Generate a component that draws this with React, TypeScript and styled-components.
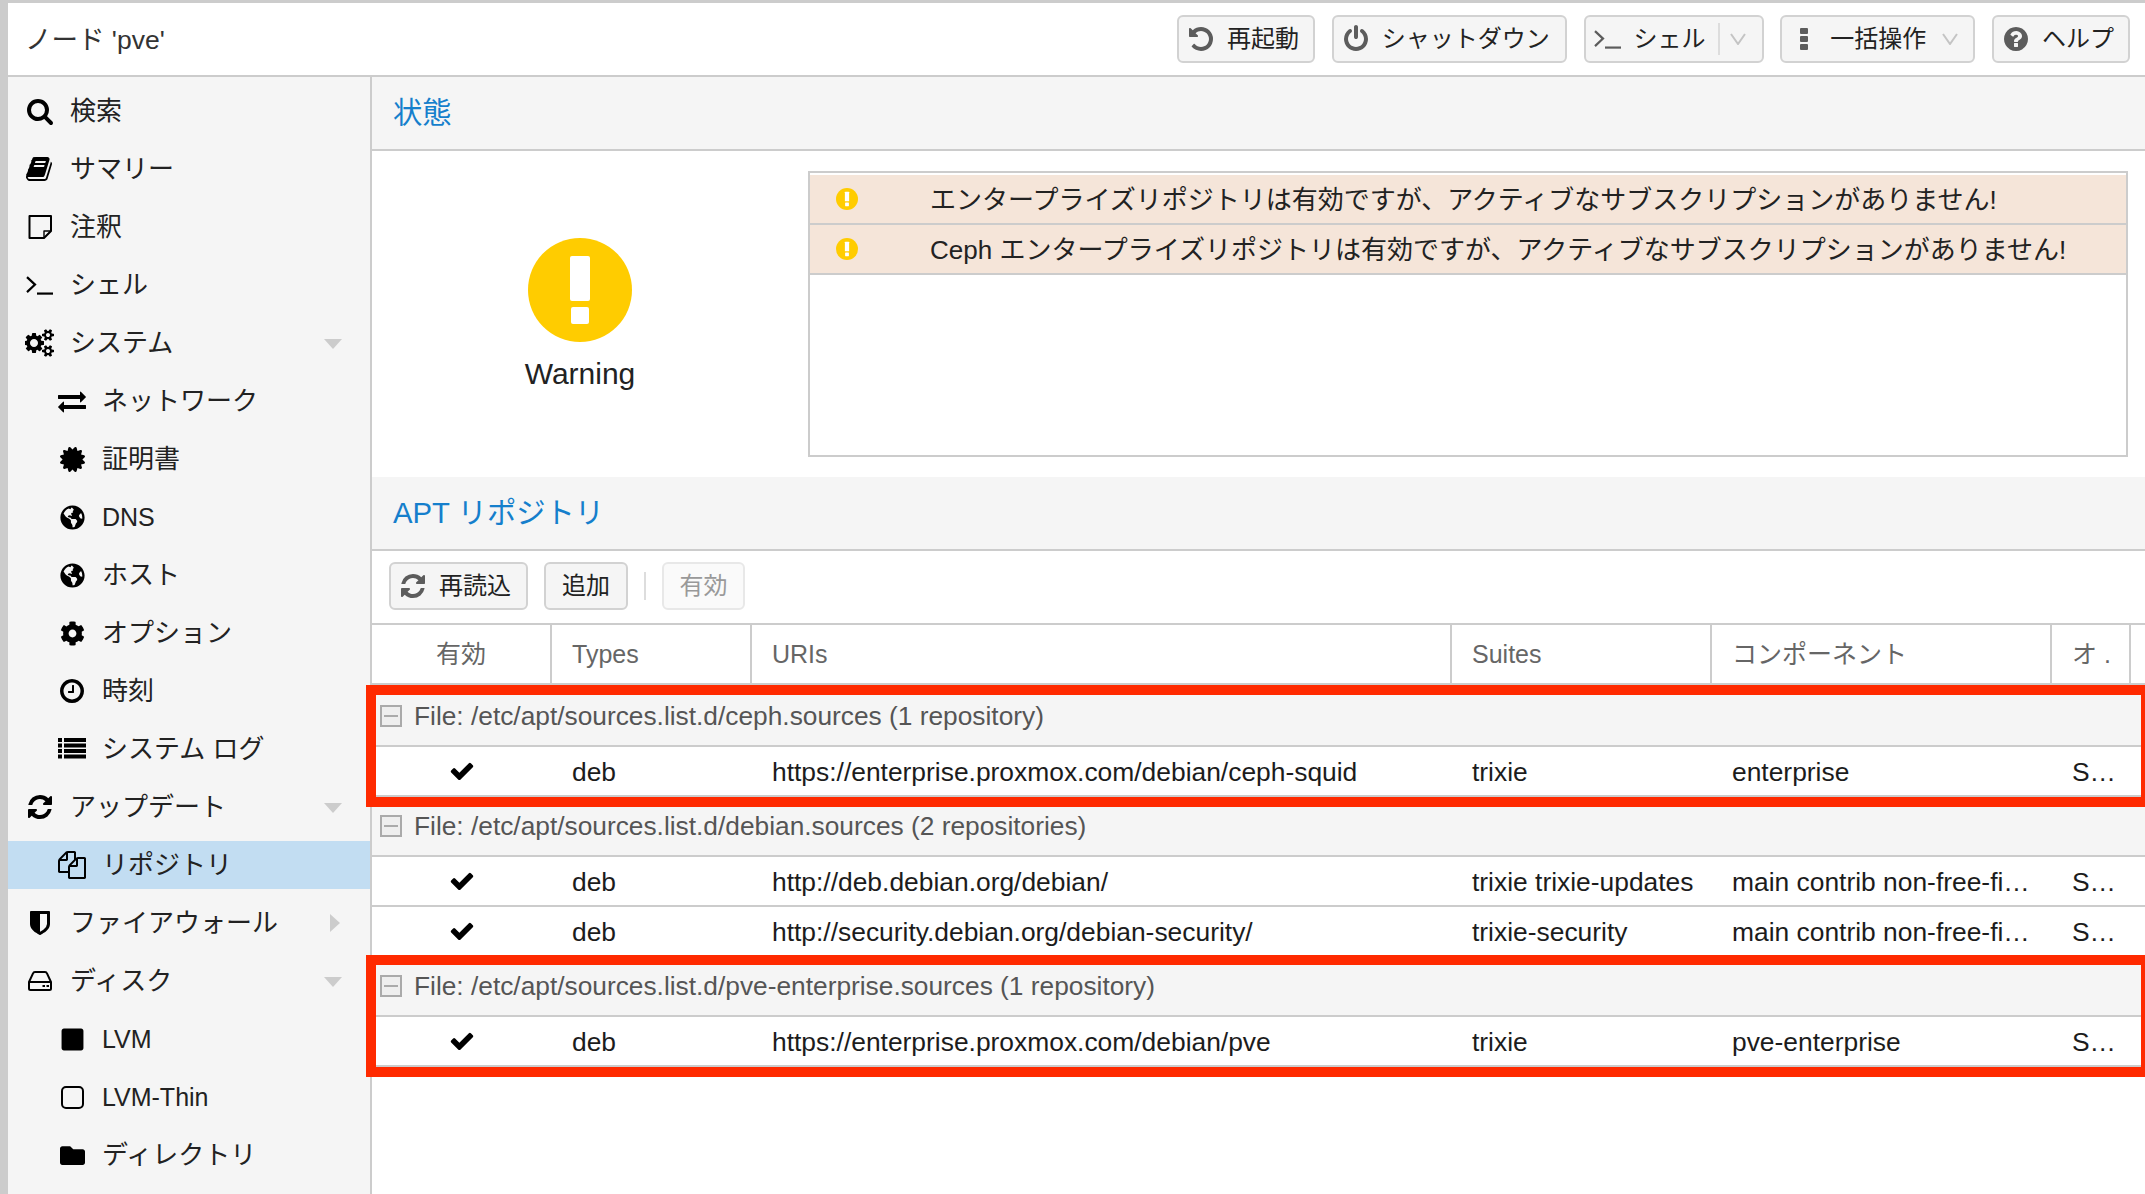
import React from "react";
import styled, { createGlobalStyle } from "styled-components";
import { FaCertificate, FaGlobeAmericas, FaCog, FaSquare, FaFolder } from "react-icons/fa";

const Global = createGlobalStyle`
  html, body { margin: 0; padding: 0; background: #fff; }
  body { width: 2145px; height: 1194px; overflow: hidden; font-family: "Liberation Sans", "Noto Sans CJK JP", sans-serif; color: #1c1c1c; }
  * { box-sizing: border-box; }
`;

const Page = styled.div`
  width: 2145px; height: 1194px; border-top: 3px solid #ccc; border-left: 8px solid #ccc;
  display: flex; flex-direction: column; background: #fff; overflow: hidden;
`;
const Header = styled.header`
  height: 74px; flex: none; display: flex; align-items: center; justify-content: space-between;
  padding: 0 15px 0 17px; border-bottom: 2px solid #ccc; background: #fff;
`;
const NodeTitle = styled.div`font-size: 26.5px; color: #333; margin-bottom: 3px;`;
const HeaderTools = styled.div`display: flex; gap: 16.75px;`;
const Btn = styled.div<{ $w: number; $off?: boolean }>`
  width: ${(p) => p.$w}px; height: 48px; display: flex; align-items: center; white-space: nowrap;
  background: ${(p) => (p.$off ? "#fafafa" : "#f5f5f5")}; border: 2px solid ${(p) => (p.$off ? "#e8e8e8" : "#d2d2d2")};
  border-radius: 6px; font-size: 24px; color: ${(p) => (p.$off ? "#999" : "#222")};
  justify-content: ${(p) => (p.$off ? "center" : "flex-start")};
`;
const BtnIcon = styled.span`
  width: 28px; height: 28px; margin: 0 12px 0 8px; display: flex; align-items: center; justify-content: center;
  color: #5c5c5c; font-size: 28px; flex: none;
`;
const BtnSep = styled.span`width: 2px; height: 32px; background: #ddd; margin-left: 12px;`;
const Chevron = styled.svg<{ $gap: number }>`width: 16px; height: 12px; margin-left: ${(p) => p.$gap}px; flex: none;`;
const PlainLabel = styled.span`margin-left: 16px; margin-bottom: 5px;`;
const Label = styled.span`margin-bottom: 5px;`;

const Body = styled.div`flex: 1; display: flex; min-height: 0;`;
const Sidebar = styled.nav`
  width: 364px; flex: none; background: #f5f5f5; border-right: 2px solid #ccc; padding-top: 10px;
  display: flex; flex-direction: column; gap: 10px; overflow: hidden;
`;
const NavRow = styled.div<{ $child?: boolean; $sel?: boolean }>`
  height: 48px; flex: none; display: flex; align-items: center; position: relative;
  padding-left: ${(p) => (p.$child ? 46 : 14)}px; background: ${(p) => (p.$sel ? "#c2ddf2" : "transparent")};
  color: #222;
`;
const NavIcon = styled.span`
  width: 36px; height: 32px; display: flex; align-items: center; justify-content: center; color: #000;
  font-size: 28px; margin-right: 12px; flex: none;
`;
const ReactIconBox = styled.span`display: flex; font-size: 25px;`;
const NavLabel = styled.span<{ $latin: boolean }>`
  font-size: ${(p) => (p.$latin ? 25 : 26)}px;
  margin-bottom: ${(p) => (p.$latin ? 0 : 5)}px;
`;
const Arrow = styled.span<{ $dir: "down" | "right" }>`
  position: absolute; width: 0; height: 0; 
  ${(p) => p.$dir === "down"
    ? "right: 28px; top: 20px; border-left: 9px solid transparent; border-right: 9px solid transparent; border-top: 10px solid #ccc;"
    : "right: 30px; top: 15px; border-top: 9px solid transparent; border-bottom: 9px solid transparent; border-left: 10px solid #ccc;"}
`;

const Main = styled.main`flex: 1; min-width: 0; display: flex; flex-direction: column;`;
const TitleBand = styled.div`
  height: 74px; flex: none; display: flex; align-items: center; padding: 0 0 7px 21px; background: #f5f5f5;
  border-bottom: 2px solid #ccc; font-size: 29.3px; color: #157fcc;
`;
const StatusBody = styled.section`
  height: 326px; flex: none; display: flex; padding: 20px 17px 20px 0; gap: 20px; background: #fff;
`;
const StatusCol = styled.div`
  width: 416px; flex: none; display: flex; flex-direction: column; align-items: center; justify-content: center; gap: 15px;
`;
const StatusLabel = styled.div`font-size: 30px; color: #222;`;
const MessageBox = styled.div`flex: 1; border: 2px solid #ccc; padding-top: 2px;`;
const MessageRow = styled.div`
  height: 50px; display: flex; align-items: center; background: #f5e5d9; border-bottom: 2px solid #ccc;
  font-size: 26px; padding-left: 26px; color: #222; white-space: nowrap;
`;
const MessageText = styled.span`margin: 0 0 3px 72px;`;

const Toolbar = styled.div`
  height: 74px; flex: none; display: flex; align-items: center; gap: 16px; padding: 0 0 2px 17px;
  border-bottom: 2px solid #ccc;
`;
const ToolSep = styled.span`width: 2px; height: 28px; background: #ddd;`;
const GridRow = styled.div`
  display: grid; grid-template-columns: 180px 200px 700px 260px 340px 79px 1fr;
`;
const HeadRow = styled(GridRow)`height: 60px; border-bottom: 2px solid #ccc;`;
const HeadCell = styled.div<{ $center?: boolean }>`
  display: flex; align-items: center; justify-content: ${(p) => (p.$center ? "center" : "flex-start")};
  padding-left: ${(p) => (p.$center ? 0 : 20)}px; border-right: 2px solid #ccc; font-size: 25px; color: #666; white-space: nowrap;
`;
const Rows = styled.div`position: relative; flex: 1;`;
const GroupRow = styled.div<{ $first?: boolean }>`
  height: ${(p) => (p.$first ? 62 : 60)}px; display: flex; align-items: center; background: #f5f5f5;
  border-bottom: 2px solid #ccc; padding: ${(p) => (p.$first ? "2px" : "0")} 0 0 8px; font-size: 26.3px; color: #555;
`;
const Expander = styled.span`
  width: 22px; height: 22px; margin-right: 12px; border: 2px solid #aaa; background: #eee; flex: none;
  display: flex; align-items: center; justify-content: center;
  &::before { content: ""; width: 14px; height: 2px; background: #aaa; }
`;
const DataRow = styled(GridRow)`height: 50px; border-bottom: 2px solid #ccc;`;
const Cell = styled.div`
  display: flex; align-items: center; padding: 3px 0 0 20px; font-size: 26.4px; color: #1c1c1c; white-space: nowrap;
`;
const CheckCell = styled.div`display: flex; align-items: center; justify-content: center; font-size: 26px; color: #000;`;
const Highlight = styled.div<{ $top: number }>`
  position: absolute; left: -6px; right: 0; top: ${(p) => p.$top}px; height: 122px;
  border: 10px solid #ff2a00; border-right-width: 4px; pointer-events: none;
`;

// FontAwesome 4 glyphs, the set this screen uses
const Fa4 = ({ d, w = 1792 }: { d: string; w?: number }) => (
  <svg width={`${w / 1792}em`} height="1em" viewBox={`0 0 ${w} 1792`} fill="currentColor"><path d={d} /></svg>
);
const P = {
  search: "M1216 832q0-185-131.5-316.5t-316.5-131.5-316.5 131.5-131.5 316.5 131.5 316.5 316.5 131.5 316.5-131.5 131.5-316.5zm512 832q0 52-38 90t-90 38q-54 0-90-38l-343-342q-179 124-399 124-143 0-273.5-55.5t-225-150-150-225-55.5-273.5 55.5-273.5 150-225 225-150 273.5-55.5 273.5 55.5 225 150 150 225 55.5 273.5q0 220-124 399l343 343q37 37 37 90z",
  book: "M1639 478q40 57 18 129l-275 906q-19 64-76.5 107.5t-122.5 43.5h-923q-77 0-148.5-53.5t-99.5-131.5q-24-67-2-127 0-4 3-27t4-37q1-8-3-21.5t-3-19.5q2-11 8-21t16.5-23.5 16.5-23.5q23-38 45-91.5t30-91.5q3-10 .5-30t-.5-28q3-11 17-28t17-23q21-36 42-92t25-90q1-9-2.5-32t.5-28q4-13 22-30.5t22-22.5q19-26 42.5-84.5t27.5-96.5q1-8-3-25.5t-2-26.5q2-8 9-18t18-23 17-21q8-12 16.5-30.5t15-35 16-36 19.5-32 26.5-23.5 36-11.5 47.5 5.5l-1 3q38-9 51-9h761q74 0 114 56t18 130l-274 906q-36 119-71.5 153.5t-128.5 34.5h-869q-27 0-38 15-11 16-1 43 24 70 144 70h923q29 0 56-15.5t35-41.5l300-987q7-22 5-57 38 15 59 43zm-1064 2q-4 13 2 22.5t20 9.5h608q13 0 25.5-9.5t16.5-22.5l21-64q4-13-2-22.5t-20-9.5h-608q-13 0-25.5 9.5t-16.5 22.5zm-83 256q-4 13 2 22.5t20 9.5h608q13 0 25.5-9.5t16.5-22.5l21-64q4-13-2-22.5t-20-9.5h-608q-13 0-25.5 9.5t-16.5 22.5z",
  files: "M1696 384q40 0 68 28t28 68v1216q0 40-28 68t-68 28h-960q-40 0-68-28t-28-68v-288h-544q-40 0-68-28t-28-68v-672q0-40 20-88t48-76l408-408q28-28 76-48t88-20h416q40 0 68 28t28 68v328q68-40 128-40h416zm-544 213l-299 299h299v-299zm-640-384l-299 299h299v-299zm196 647l316-316v-416h-384v416q0 40-28 68t-68 28h-416v640h512v-256q0-40 20-88t48-76zm956 804v-1152h-384v416q0 40-28 68t-68 28h-416v640h896z",
  undo: "M1664 896q0 156-61 298t-164 245-245 164-298 61q-172 0-327-72.5t-264-204.5q-7-10-6.5-22.5t8.5-20.5l137-138q10-9 25-9 16 2 23 12 73 95 179 147t225 52q104 0 198.5-40.5t163.5-109.5 109.5-163.5 40.5-198.5-40.5-198.5-109.5-163.5-163.5-109.5-198.5-40.5q-98 0-188 35.5t-160 101.5l137 138q31 30 14 69-17 40-59 40h-448q-26 0-45-19t-19-45v-448q0-42 40-59 39-17 69 14l130 129q107-101 244.5-156.5t284.5-55.5q156 0 298 61t245 164 164 245 61 298z",
  shield: "M1344 960v-640h-448v1137q119-63 213-137 235-184 235-360zm192-768v768q0 86-33.5 170.5t-83 150-118 127.5-126.5 103-121 77.5-89.5 49.5-42.5 20q-12 6-26 6t-26-6q-16-7-42.5-20t-89.5-49.5-121-77.5-126.5-103-118-127.5-83-150-33.5-170.5v-768q0-26 19-45t45-19h1152q26 0 45 19t19 45z",
  clock: "M1024 544v448q0 14-9 23t-23 9h-320q-14 0-23-9t-9-23v-64q0-14 9-23t23-9h224v-352q0-14 9-23t23-9h64q14 0 23 9t9 23zm416 352q0-148-73-273t-198-198-273-73-273 73-198 198-73 273 73 273 198 198 273 73 273-73 198-198 73-273zm224 0q0 209-103 385.5t-279.5 279.5-385.5 103-385.5-103-279.5-279.5-103-385.5 103-385.5 279.5-279.5 385.5-103 385.5 103 279.5 279.5 103 385.5z",
  refresh: "M1639 1056q0 5-1 7-64 268-268 434.5t-478 166.5q-146 0-282.5-55t-243.5-157l-129 129q-19 19-45 19t-45-19-19-45v-448q0-26 19-45t45-19h448q26 0 45 19t19 45-19 45l-137 137q71 66 161 102t187 36q134 0 250-65t186-179q11-17 53-117 8-23 30-23h192q13 0 22.5 9.5t9.5 22.5zm25-800v448q0 26-19 45t-45 19h-448q-26 0-45-19t-19-45 19-45l138-138q-148-137-349-137-134 0-250 65t-186 179q-11 17-53 117-8 23-30 23h-199q-13 0-22.5-9.5t-9.5-22.5v-7q65-268 270-434.5t480-166.5q146 0 284 55.5t245 156.5l130-129q19-19 45-19t45 19 19 45z",
  check: "M1671 566q0 40-28 68l-724 724-136 136q-28 28-68 28t-68-28l-136-136-362-362q-28-28-28-68t28-68l136-136q28-28 68-28t68 28l294 295 656-657q28-28 68-28t68 28l136 136q28 28 28 68z",
  power: "M1664 896q0 156-61 298t-164 245-245 164-298 61-298-61-245-164-164-245-61-298q0-182 80.5-343t226.5-270q43-32 95.5-25t83.5 50q32 42 24.5 94.5t-49.5 84.5q-98 74-151.5 181t-53.5 228q0 104 40.5 198.5t109.5 163.5 163.5 109.5 198.5 40.5 198.5-40.5 163.5-109.5 109.5-163.5 40.5-198.5q0-121-53.5-228t-151.5-181q-42-32-49.5-84.5t24.5-94.5q31-43 84-50t95 25q146 109 226.5 270t80.5 343zm-640-768v640q0 52-38 90t-90 38-90-38-38-90v-640q0-52 38-90t90-38 90 38 38 90z",
  question: "M1024 1376v-192q0-14-9-23t-23-9h-192q-14 0-23 9t-9 23v192q0 14 9 23t23 9h192q14 0 23-9t9-23zm256-672q0-88-55.5-163t-138.5-116-170-41q-243 0-371 213-15 24 8 42l132 100q7 6 19 6 16 0 25-12 53-68 86-92 34-24 86-24 48 0 85.5 26t37.5 59q0 38-20 61t-68 45q-63 28-115.5 86.5t-52.5 125.5v36q0 14 9 23t23 9h192q14 0 23-9t9-23q0-19 21.5-49.5t54.5-49.5q32-18 49-28.5t46-35 44.5-48 28-60.5 12.5-81zm384 192q0 209-103 385.5t-279.5 279.5-385.5 103-385.5-103-279.5-279.5-103-385.5 103-385.5 279.5-279.5 385.5-103 385.5 103 279.5 279.5 103 385.5z",
  cogs: "M832 896q0-106-75-181t-181-75-181 75-75 181 75 181 181 75 181-75 75-181zm768 512q0-52-38-90t-90-38-90 38-38 90q0 53 37.5 90.5t90.5 37.5 90.5-37.5 37.5-90.5zm0-1024q0-52-38-90t-90-38-90 38-38 90q0 53 37.5 90.5t90.5 37.5 90.5-37.5 37.5-90.5zm-384 421v185q0 10-7 19.5t-16 10.5l-155 24q-11 35-32 76 34 48 90 115 7 11 7 20 0 12-7 19-23 30-82.5 89.5t-78.5 59.5q-11 0-21-7l-115-90q-37 19-77 31-11 108-23 155-7 24-30 24h-186q-11 0-20-7.5t-10-17.5l-23-153q-34-10-75-31l-118 89q-7 7-20 7-11 0-21-8-144-133-144-160 0-9 7-19 10-14 41-53t47-61q-23-44-35-82l-152-24q-10-1-17-9.5t-7-19.5v-185q0-10 7-19.5t16-10.5l155-24q11-35 32-76-34-48-90-115-7-11-7-20 0-12 7-20 22-30 82-89t79-59q11 0 21 7l115 90q34-18 77-32 11-108 23-154 7-24 30-24h186q11 0 20 7.5t10 17.5l23 153q34 10 75 31l118-89q8-7 20-7 11 0 21 8 144 133 144 160 0 8-7 19-12 16-42 54t-45 60q23 48 34 82l152 23q10 2 17 10.5t7 19.5zm640 533v140q0 16-149 31-12 27-30 52 51 113 51 138 0 4-4 7-122 71-124 71-8 0-46-47t-52-68q-20 2-30 2t-30-2q-14 21-52 68t-46 47q-2 0-124-71-4-3-4-7 0-25 51-138-18-25-30-52-149-15-149-31v-140q0-16 149-31 13-29 30-52-51-113-51-138 0-4 4-7 4-2 35-20t59-34 30-16q8 0 46 46.5t52 67.5q20-2 30-2t30 2q51-71 92-112l6-2q4 0 124 70 4 3 4 7 0 25-51 138 17 23 30 52 149 15 149 31zm0-1024v140q0 16-149 31-12 27-30 52 51 113 51 138 0 4-4 7-122 71-124 71-8 0-46-47t-52-68q-20 2-30 2t-30-2q-14 21-52 68t-46 47q-2 0-124-71-4-3-4-7 0-25 51-138-18-25-30-52-149-15-149-31v-140q0-16 149-31 13-29 30-52-51-113-51-138 0-4 4-7 4-2 35-20t59-34 30-16q8 0 46 46.5t52 67.5q20-2 30-2t30 2q51-71 92-112l6-2q4 0 124 70 4 3 4 7 0 25-51 138 17 23 30 52 149 15 149 31z",
  exchange: "M1792 1184v192q0 13-9.5 22.5t-22.5 9.5h-1376v192q0 13-9.5 22.5t-22.5 9.5q-12 0-24-10l-319-320q-9-9-9-22 0-14 9-23l320-320q9-9 23-9 13 0 22.5 9.5t9.5 22.5v192h1376q13 0 22.5 9.5t9.5 22.5zm0-544q0 14-9 23l-320 320q-9 9-23 9-13 0-22.5-9.5t-9.5-22.5v-192h-1376q-13 0-22.5-9.5t-9.5-22.5v-192q0-13 9.5-22.5t22.5-9.5h1376v-192q0-14 9-23t23-9q12 0 24 10l319 319q9 9 9 23z",
};

const Prompt = ({ size = 28 }: { size?: number }) => (
  <svg width={size} height={size * 0.72} viewBox="0 0 28 20" fill="none" stroke="currentColor" strokeWidth="2.2">
    <path d="M1 2l8 7.500-8 7.500" />
    <path d="M11 18.500h16" />
  </svg>
);
const Warn = ({ size }: { size: number }) => (
  <svg width={size} height={size} viewBox="0 0 104 104">
    <circle cx="52" cy="52" r="52" fill="#ffcc00" />
    <rect x="42" y="18" width="20" height="45" rx="2" fill="#fff" />
    <rect x="43" y="69" width="18" height="17" rx="2" fill="#fff" />
  </svg>
);
const Down = ({ gap }: { gap: number }) => (
  <Chevron $gap={gap} viewBox="0 0 16 12" fill="none" stroke="#c4c4c4" strokeWidth="2"><path d="M1 1l7 10 7-10" /></Chevron>
);
const Note = () => (
  <svg width="24" height="24" viewBox="0 0 24 24" fill="none" stroke="currentColor" strokeWidth="2" strokeLinejoin="round">
    <path d="M1.500 1h21.500v15l-7 7H1.500z" />
    <path d="M23 16h-7v7" strokeWidth="1.400" />
  </svg>
);
const Disk = () => (
  <svg width="24" height="20" viewBox="0 0 24 20" fill="none" stroke="currentColor" strokeWidth="2">
    <path d="M1 11L5 2.500Q5.500 1 7 1h10q1.500 0 2 1.500L23 11v6.500q0 1.500-1.500 1.500h-19Q1 19 1 17.500z" />
    <path d="M1 11h22" />
    <rect x="14.500" y="14" width="2.500" height="2" fill="currentColor" stroke="none" />
    <rect x="18.500" y="14" width="2.500" height="2" fill="currentColor" stroke="none" />
  </svg>
);
const ListIcon = () => (
  <svg width="28" height="22" viewBox="0 0 28 22" fill="currentColor">
    {[0, 5.5, 11, 16.5].map((y) => (
      <React.Fragment key={y}>
        <rect x="0" y={y} width="4" height="4" />
        <rect x="6" y={y} width="22" height="4" />
      </React.Fragment>
    ))}
  </svg>
);
const SquareOutline = () => (
  <svg width="23" height="23" viewBox="0 0 23 23" fill="none" stroke="currentColor" strokeWidth="2"><rect x="1" y="1" width="21" height="21" rx="4" /></svg>
);
const Dots = () => (
  <svg width="8" height="22" viewBox="0 0 8 22" fill="currentColor">
    <rect y="0" width="8" height="6" rx="1" /><rect y="8" width="8" height="6" rx="1" /><rect y="16" width="8" height="6" rx="1" />
  </svg>
);

type Nav = { icon: React.ReactNode; label: string; child?: boolean; sel?: boolean; arrow?: "down" | "right"; latin?: boolean };
const nav: Nav[] = [
  { icon: <Fa4 d={P.search} />, label: "検索" },
  { icon: <Fa4 d={P.book} />, label: "サマリー" },
  { icon: <Note />, label: "注釈" },
  { icon: <Prompt />, label: "シェル" },
  { icon: <Fa4 d={P.cogs} w={1920} />, label: "システム", arrow: "down" },
  { icon: <Fa4 d={P.exchange} />, label: "ネットワーク", child: true },
  { icon: <ReactIconBox><FaCertificate /></ReactIconBox>, label: "証明書", child: true },
  { icon: <ReactIconBox><FaGlobeAmericas /></ReactIconBox>, label: "DNS", child: true, latin: true },
  { icon: <ReactIconBox><FaGlobeAmericas /></ReactIconBox>, label: "ホスト", child: true },
  { icon: <ReactIconBox><FaCog /></ReactIconBox>, label: "オプション", child: true },
  { icon: <Fa4 d={P.clock} />, label: "時刻", child: true },
  { icon: <ListIcon />, label: "システム ログ", child: true },
  { icon: <Fa4 d={P.refresh} />, label: "アップデート", arrow: "down" },
  { icon: <Fa4 d={P.files} />, label: "リポジトリ", child: true, sel: true },
  { icon: <Fa4 d={P.shield} />, label: "ファイアウォール", arrow: "right" },
  { icon: <Disk />, label: "ディスク", arrow: "down" },
  { icon: <ReactIconBox><FaSquare /></ReactIconBox>, label: "LVM", child: true, latin: true },
  { icon: <SquareOutline />, label: "LVM-Thin", child: true, latin: true },
  { icon: <ReactIconBox><FaFolder /></ReactIconBox>, label: "ディレクトリ", child: true },
];

type Repo = { uri: string; suites: string; comp: string };
const groups: { file: string; repos: Repo[] }[] = [
  { file: "File: /etc/apt/sources.list.d/ceph.sources (1 repository)", repos: [
    { uri: "https://enterprise.proxmox.com/debian/ceph-squid", suites: "trixie", comp: "enterprise" },
  ] },
  { file: "File: /etc/apt/sources.list.d/debian.sources (2 repositories)", repos: [
    { uri: "http://deb.debian.org/debian/", suites: "trixie trixie-updates", comp: "main contrib non-free-fi…" },
    { uri: "http://security.debian.org/debian-security/", suites: "trixie-security", comp: "main contrib non-free-fi…" },
  ] },
  { file: "File: /etc/apt/sources.list.d/pve-enterprise.sources (1 repository)", repos: [
    { uri: "https://enterprise.proxmox.com/debian/pve", suites: "trixie", comp: "pve-enterprise" },
  ] },
];

export default function App() {
  return (
    <Page>
      <Global />
      <Header>
        <NodeTitle>ノード 'pve'</NodeTitle>
        <HeaderTools>
          <Btn $w={138}><BtnIcon><Fa4 d={P.undo} /></BtnIcon><Label>再起動</Label></Btn>
          <Btn $w={235}><BtnIcon><Fa4 d={P.power} /></BtnIcon><Label>シャットダウン</Label></Btn>
          <Btn $w={180}><BtnIcon><Prompt /></BtnIcon><Label>シェル</Label><BtnSep /><Down gap={10} /></Btn>
          <Btn $w={195}><BtnIcon><Dots /></BtnIcon><Label>一括操作</Label><Down gap={16} /></Btn>
          <Btn $w={138}><BtnIcon><Fa4 d={P.question} /></BtnIcon><Label>ヘルプ</Label></Btn>
        </HeaderTools>
      </Header>
      <Body>
        <Sidebar>
          {nav.map((n) => (
            <NavRow key={n.label} $child={n.child} $sel={n.sel}>
              <NavIcon>{n.icon}</NavIcon>
              <NavLabel $latin={!!n.latin}>{n.label}</NavLabel>
              {n.arrow && <Arrow $dir={n.arrow} />}
            </NavRow>
          ))}
        </Sidebar>
        <Main>
          <TitleBand>状態</TitleBand>
          <StatusBody>
            <StatusCol>
              <Warn size={104} />
              <StatusLabel>Warning</StatusLabel>
            </StatusCol>
            <MessageBox>
              <MessageRow><Warn size={22} /><MessageText>エンタープライズリポジトリは有効ですが、アクティブなサブスクリプションがありません!</MessageText></MessageRow>
              <MessageRow><Warn size={22} /><MessageText>Ceph エンタープライズリポジトリは有効ですが、アクティブなサブスクリプションがありません!</MessageText></MessageRow>
            </MessageBox>
          </StatusBody>
          <TitleBand>APT リポジトリ</TitleBand>
          <Toolbar>
            <Btn $w={139}><BtnIcon><Fa4 d={P.refresh} /></BtnIcon><Label>再読込</Label></Btn>
            <Btn $w={84}><PlainLabel>追加</PlainLabel></Btn>
            <ToolSep />
            <Btn $w={83} $off><Label>有効</Label></Btn>
          </Toolbar>
          <HeadRow>
            <HeadCell $center><Label>有効</Label></HeadCell>
            <HeadCell>Types</HeadCell>
            <HeadCell>URIs</HeadCell>
            <HeadCell>Suites</HeadCell>
            <HeadCell><Label>コンポーネント</Label></HeadCell>
            <HeadCell><Label>オ .</Label></HeadCell>
          </HeadRow>
          <Rows>
            {groups.map((g, i) => (
              <React.Fragment key={g.file}>
                <GroupRow $first={i === 0}><Expander />{g.file}</GroupRow>
                {g.repos.map((r) => (
                  <DataRow key={r.uri}>
                    <CheckCell><Fa4 d={P.check} /></CheckCell>
                    <Cell>deb</Cell>
                    <Cell>{r.uri}</Cell>
                    <Cell>{r.suites}</Cell>
                    <Cell>{r.comp}</Cell>
                    <Cell>S…</Cell>
                  </DataRow>
                ))}
              </React.Fragment>
            ))}
            <Highlight $top={0} />
            <Highlight $top={270} />
          </Rows>
        </Main>
      </Body>
    </Page>
  );
}
